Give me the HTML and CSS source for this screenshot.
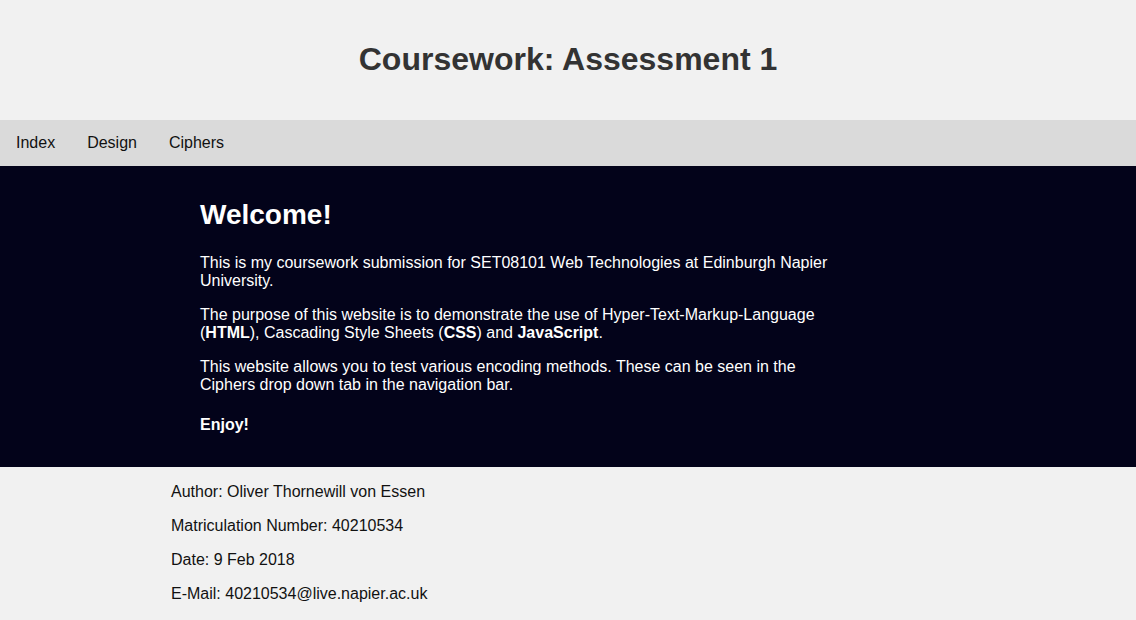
FILE: index.html
```html
<!DOCTYPE html>
<html lang="en">
<head>
<meta charset="utf-8">
<title>Coursework: Assessment 1</title>
<link rel="stylesheet" href="styles.css">
</head>
<body>
<header class="site-header">
  <h1 class="site-title">Coursework: Assessment 1</h1>
</header>
<nav class="navbar">
  <a class="nav-link" href="#">Index</a>
  <a class="nav-link" href="#">Design</a>
  <a class="nav-link" href="#">Ciphers</a>
</nav>
<main class="hero">
  <div class="hero-inner">
    <h2 class="hero-title">Welcome!</h2>
    <p class="hero-text">This is my coursework submission for SET08101 Web Technologies at Edinburgh Napier University.</p>
    <p class="hero-text">The purpose of this website is to demonstrate the use of Hyper-Text-Markup-Language (<b>HTML</b>), Cascading Style Sheets (<b>CSS</b>) and <b>JavaScript</b>.</p>
    <p class="hero-text">This website allows you to test various encoding methods. These can be seen in the Ciphers drop down tab in the navigation bar.</p>
    <h4 class="hero-enjoy">Enjoy!</h4>
  </div>
</main>
<footer class="info">
  <p class="info-line">Author: Oliver Thornewill von Essen</p>
  <p class="info-line">Matriculation Number: 40210534</p>
  <p class="info-line">Date: 9 Feb 2018</p>
  <p class="info-line">E-Mail: 40210534@live.napier.ac.uk</p>
</footer>
</body>
</html>
```

FILE: styles.css
```css
html, body {
  margin: 0;
  padding: 0;
}
body {
  background: #f1f1f1;
  font-family: "Liberation Sans", Arial, sans-serif;
  font-size: 16px;
  color: #111;
}
.site-header {
  height: 120px;
  display: flex;
  align-items: center;
  justify-content: center;
}
.site-title {
  margin: 0;
  font-size: 32px;
  font-weight: bold;
  color: #333;
  position: relative;
  top: -1px;
}
.navbar {
  background: #dadada;
  display: flex;
  height: 46px;
  align-items: center;
}
.nav-link {
  padding: 0 16px;
  color: #111;
  text-decoration: none;
  line-height: 46px;
}
.hero {
  background: #03031a;
  color: #fff;
  padding: 10px 0 11px;
}
.hero-inner {
  margin-left: 200px;
  width: 640px;
}
.hero-title {
  font-size: 28px;
  margin: 23px 0;
  line-height: 32px;
}
.hero-text {
  margin: 16px 0;
  line-height: 18px;
}
.hero-enjoy {
  font-size: 16px;
  margin: 22px 0;
  line-height: 18px;
}
.info {
  padding: 1px 0 0 171px;
  margin-top: -1px;
}
.info-line {
  margin: 16px 0;
  line-height: 18px;
}
```
